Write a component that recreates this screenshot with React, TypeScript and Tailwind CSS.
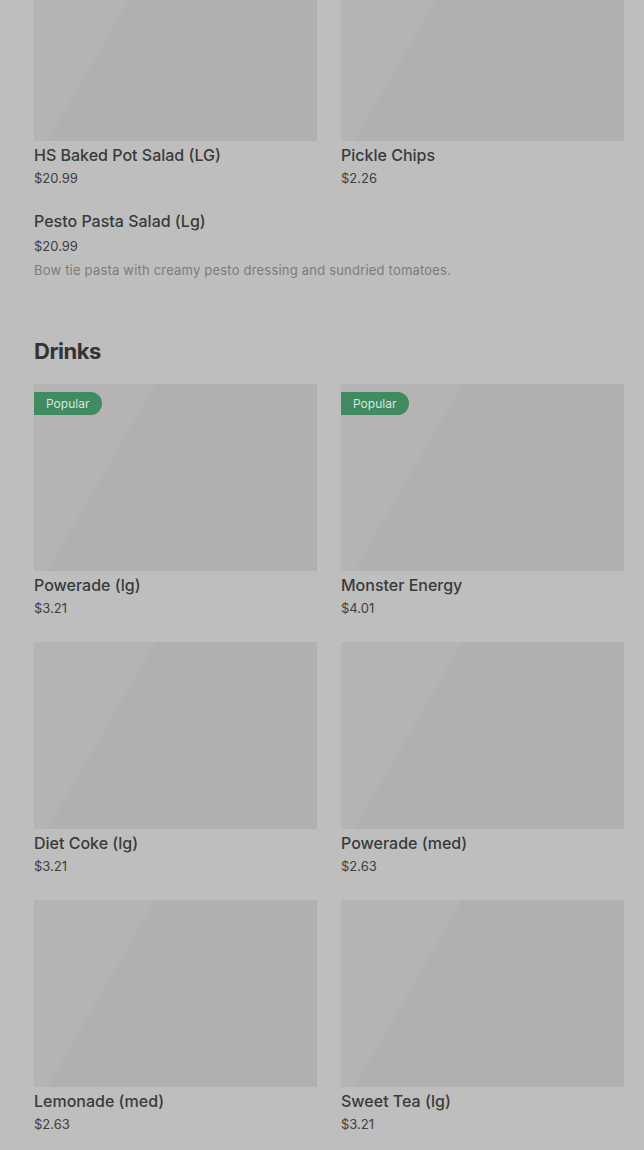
import React from "react";

interface Item {
  name: string;
  price: string;
  popular?: boolean;
}

const topItems: Item[] = [
  { name: "HS Baked Pot Salad (LG)", price: "$20.99" },
  { name: "Pickle Chips", price: "$2.26" },
];

const drinks: Item[] = [
  { name: "Powerade (lg)", price: "$3.21", popular: true },
  { name: "Monster Energy", price: "$4.01", popular: true },
  { name: "Diet Coke (lg)", price: "$3.21" },
  { name: "Powerade (med)", price: "$2.63" },
  { name: "Lemonade (med)", price: "$2.63" },
  { name: "Sweet Tea (lg)", price: "$3.21" },
];

function ItemCard({ item }: { item: Item }) {
  return (
    <div className="flex flex-col">
      <div className="relative h-[187px] bg-[linear-gradient(120deg,#b4b4b4_31%,#b0b0b0_31%)]">
        {item.popular && (
          <span className="absolute left-0 top-2 flex h-[23px] w-[68px] items-center rounded-r-full bg-[#428a62] pl-3 text-[12px] text-[#d8e6dd]">
            Popular
          </span>
        )}
      </div>
      <div className="mt-1 text-[16px] leading-5 font-medium text-[#3a3a3a]">{item.name}</div>
      <div className="mt-[3px] text-[13px] leading-5 text-[#404040]">{item.price}</div>
    </div>
  );
}

export default function App() {
  return (
    <div
      className="min-h-[1150px] overflow-hidden bg-[#bebebe] pl-[34px] pr-5"
      style={{ fontFamily: "Inter, 'Noto Sans', sans-serif" }}
    >
      <div className="-mt-[46px] grid grid-cols-2 gap-x-6">
        {topItems.map((item) => (
          <ItemCard key={item.name} item={item} />
        ))}
      </div>

      <div className="mt-[23px]">
        <div className="text-[16px] leading-5 font-medium text-[#3a3a3a]">Pesto Pasta Salad (Lg)</div>
        <div className="mt-[5px] text-[13px] leading-5 text-[#404040]">$20.99</div>
        <div className="mt-1 text-[13px] leading-5 tracking-[0.2px] text-[#7c7c7c]">
          Bow tie pasta with creamy pesto dressing and sundried tomatoes.
        </div>
      </div>

      <h2 className="mt-[57px] text-[22px] leading-7 font-bold tracking-[-0.5px] text-[#333333]">Drinks</h2>

      <div className="mt-[19px] grid grid-cols-2 gap-x-6 gap-y-6">
        {drinks.map((item) => (
          <ItemCard key={item.name} item={item} />
        ))}
      </div>
    </div>
  );
}
